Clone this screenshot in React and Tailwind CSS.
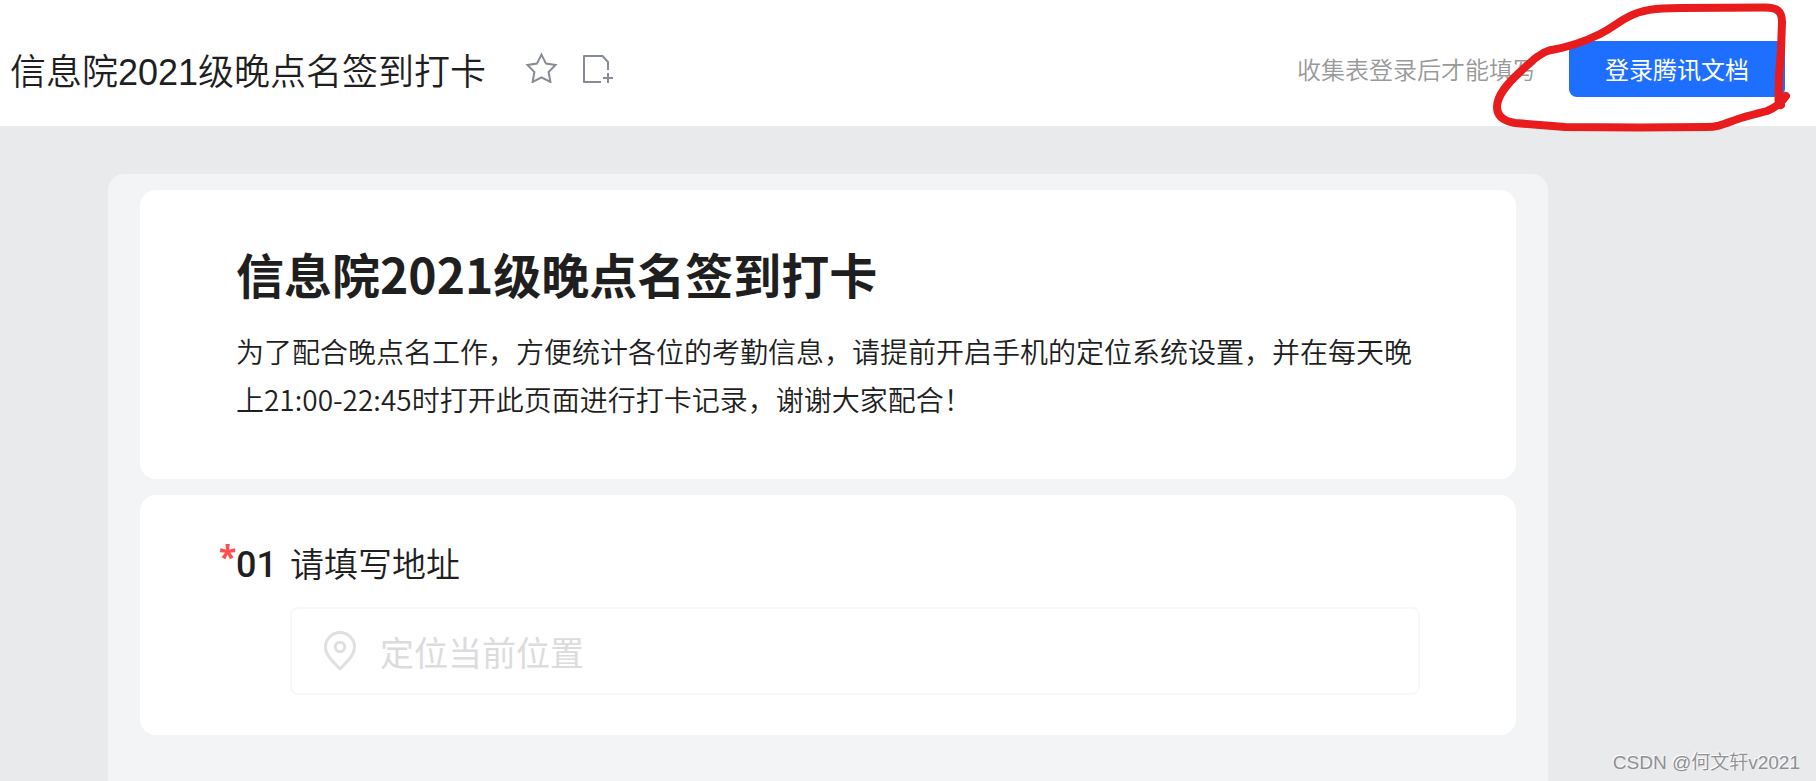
import React from 'react';

function StarIcon() {
  return (
    <svg className="h-8 w-9" viewBox="0 0 36 32" fill="none" stroke="#868b96" strokeWidth="2" strokeLinejoin="miter">
      <path d="M17.5 3.6 L22 12.6 L31.5 14 L24.6 21 L26.4 31 L17.5 26.4 L8.6 31 L10.4 21 L3.5 14 L13 12.6 Z" />
    </svg>
  );
}

function AddPageIcon() {
  return (
    <svg className="h-8 w-8" viewBox="0 0 32 32" fill="none" stroke="#868b96" strokeWidth="2">
      <path d="M19 31 H2 V5 H20.5 L26 11 V19" strokeLinejoin="round" />
      <path d="M21 27 H31 M26 22 V32" />
    </svg>
  );
}

function PinIcon() {
  return (
    <svg className="h-10 w-8 shrink-0" viewBox="0 0 32 40" fill="none" stroke="#dfe0e2" strokeWidth="3">
      <path d="M16 38 C11 32.5 1.5 25 1.5 16 A14.5 14.5 0 0 1 30.5 16 C30.5 25 21 32.5 16 38 Z" strokeLinejoin="round" />
      <circle cx="16" cy="16" r="4.7" />
    </svg>
  );
}

function PenCircle() {
  return (
    <svg className="pointer-events-none absolute top-0 right-0 h-[140px] w-[336px]" viewBox="1480 0 336 140" fill="none" stroke="#e81c1c" strokeWidth="8" strokeLinecap="round" strokeLinejoin="round">
      <path d="M1786 96 C1782 102 1777 107 1767 111 C1756 114 1748 116 1738 119 C1724 124 1719 127 1706 127 L1640 127.5 L1565 127 L1515 123 C1503 121 1497 116 1497 107 C1497 95 1508 83 1520 72 C1533 60 1540 53 1549 50.5 C1564 48 1584 42 1600 34 C1614 27 1618 22 1628 17 C1641 10 1655 8 1680 8 L1765 7.5 C1777 7.5 1782 11 1782 22 L1781 50 L1779 75 L1778.5 100 L1781 105" />
    </svg>
  );
}

export default function App() {
  return (
    <div className="relative flex min-h-screen flex-col overflow-hidden bg-[#e9eaec] font-['Noto_Sans_CJK_SC',sans-serif] text-[#1f1f1f]">
      <header className="relative flex h-[126px] items-center bg-white pt-3 pr-[31px] pl-[10px]">
        <span className="pt-2 font-['Liberation_Sans','Noto_Sans_CJK_SC',sans-serif] text-[36px] leading-[52px] font-[350]">信息院2021级晚点名签到打卡</span>
        <button type="button" aria-label="收藏" className="ml-[38px] pb-1">
          <StarIcon />
        </button>
        <button type="button" aria-label="添加" className="ml-[22px] pb-1">
          <AddPageIcon />
        </button>
        <span className="ml-auto text-[24px] leading-8 font-[350] text-[#999999]">收集表登录后才能填写</span>
        <button type="button" className="ml-8 h-14 rounded-lg bg-[#1e6fff] px-9 text-[24px] leading-8 text-white">登录腾讯文档</button>
        <PenCircle />
      </header>

      <main className="flex flex-1 flex-col pt-12 pl-[108px]">
        <div className="flex w-full max-w-[1440px] flex-1 flex-col gap-4 rounded-t-2xl bg-[#f3f4f6] px-8 pt-4">
          <section className="rounded-2xl bg-white px-24 pt-12 pb-14">
            <h1 className="text-[48px] leading-[71px] font-bold">信息院2021级晚点名签到打卡</h1>
            <p className="mt-[18px] text-[28px] leading-[48px] font-[350]">
              为了配合晚点名工作，方便统计各位的考勤信息，请提前开启手机的定位系统设置，并在每天晚上21:00-22:45时打开此页面进行打卡记录，谢谢大家配合！
            </p>
          </section>

          <section className="rounded-2xl bg-white pt-11 pr-24 pb-10 pl-[79px]">
            <label htmlFor="address" className="flex items-center text-[34px] leading-[48px] font-[350]">
              <span className="w-[17px] pb-3 font-['Noto_Sans',sans-serif] text-[32px] leading-8 font-bold text-[#ff4d4f]">*</span>
              <span className="w-[54px] pt-1 font-['Roboto',sans-serif] text-[36px] leading-10 font-medium">01</span>
              <span>请填写地址</span>
            </label>
            <div className="mt-5 ml-[71px] flex h-[88px] items-center gap-6 rounded-lg border-2 border-[#f8f8f9] px-8">
              <PinIcon />
              <input
                id="address"
                type="text"
                placeholder="定位当前位置"
                className="h-14 min-w-0 flex-1 bg-transparent text-[34px] outline-none placeholder:text-[#dcdcdc]"
              />
            </div>
          </section>
        </div>
      </main>

      <div className="absolute right-4 bottom-1 font-['Liberation_Sans','Noto_Sans_CJK_SC',sans-serif] text-[19px] leading-7 font-[350] text-[#8e8f92] [text-shadow:-1px_-1px_0_#ffffff]">
        CSDN @何文轩v2021
      </div>
    </div>
  );
}
